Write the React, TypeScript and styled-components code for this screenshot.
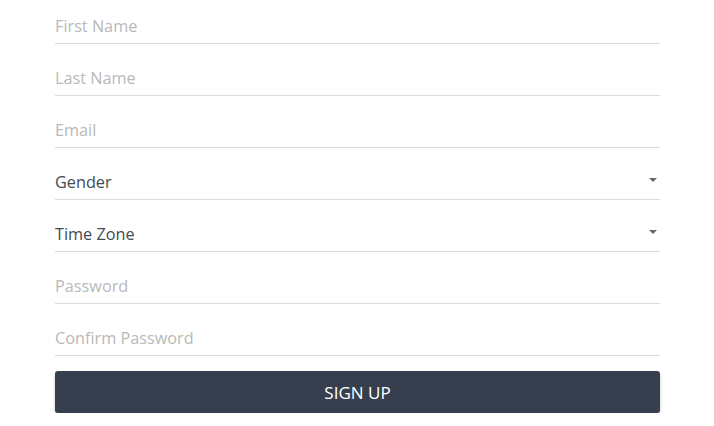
import React from "react";
import styled, { createGlobalStyle } from "styled-components";

const Global = createGlobalStyle`
  html, body { margin: 0; padding: 0; background: #fff; }
  body { font-family: "Open Sans", "Noto Sans", sans-serif; }
  * { box-sizing: border-box; }
`;

const Form = styled.form`
  width: 605px;
  margin-left: 55px;
  display: flex;
  flex-direction: column;
  gap: 8px;
`;

const Field = styled.div`
  position: relative;
  height: 44px;
  border-bottom: 1px solid #dcdcdc;
  display: flex;
  align-items: center;
  padding-top: 8px;
`;

const Input = styled.input`
  border: none;
  outline: none;
  width: 100%;
  padding: 0;
  background: transparent;
  font-family: "Open Sans", "Noto Sans", sans-serif;
  font-size: 16.25px;
  color: #444;
  &::placeholder { color: #b9b9b9; opacity: 1; }
`;

const SelectLabel = styled.span`
  flex: 1;
  font-size: 16.25px;
  color: #434a55;
`;

const Caret = styled.span`
  width: 0;
  height: 0;
  margin-right: 3px;
  margin-top: -4px;
  border-left: 4px solid transparent;
  border-right: 4px solid transparent;
  border-top: 4px solid #666;
`;

const Button = styled.button`
  margin-top: 7px;
  height: 42px;
  border: none;
  border-radius: 3px;
  background: #373f4e;
  color: #fff;
  font-family: "Open Sans", "Noto Sans", sans-serif;
  font-size: 17px;
  box-shadow: 0 2px 3px rgba(0, 0, 0, 0.25);
  cursor: pointer;
`;

export default function App() {
  return (
    <>
      <Global />
      <Form onSubmit={(e) => e.preventDefault()}>
        <Field><Input placeholder="First Name" /></Field>
        <Field><Input placeholder="Last Name" /></Field>
        <Field><Input placeholder="Email" /></Field>
        <Field><SelectLabel>Gender</SelectLabel><Caret /></Field>
        <Field><SelectLabel>Time Zone</SelectLabel><Caret /></Field>
        <Field><Input type="password" placeholder="Password" /></Field>
        <Field><Input type="password" placeholder="Confirm Password" /></Field>
        <Button type="submit">SIGN UP</Button>
      </Form>
    </>
  );
}
